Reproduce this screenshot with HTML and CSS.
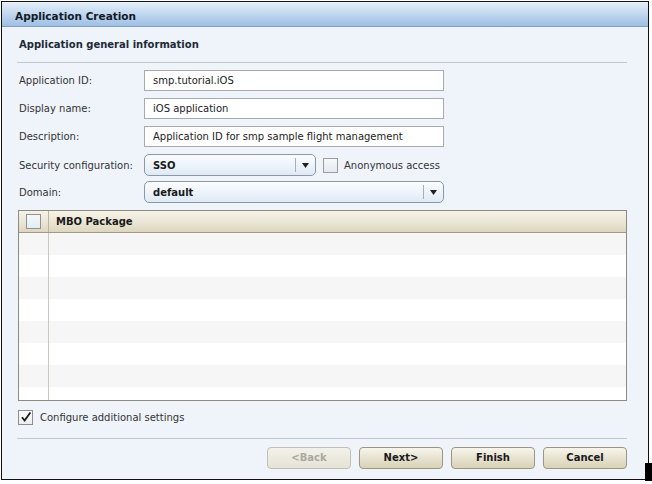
FILE: index.html
```html
<!DOCTYPE html>
<html>
<head>
<meta charset="utf-8">
<link rel="stylesheet" href="styles.css">
</head>
<body>
<div class="window">
  <div class="titlebar">Application Creation</div>
  <div class="content">
    <div class="section-title">Application general information</div>
    <div class="form">
      <div class="row">
        <div class="label">Application ID:</div>
        <div class="input">smp.tutorial.iOS</div>
      </div>
      <div class="row">
        <div class="label">Display name:</div>
        <div class="input">iOS application</div>
      </div>
      <div class="row">
        <div class="label">Description:</div>
        <div class="input">Application ID for smp sample flight management</div>
      </div>
      <div class="row sel">
        <div class="label">Security configuration:</div>
        <div class="select short">
          <span class="select-text">SSO</span>
          <span class="select-btn"><svg width="7" height="5" viewBox="0 0 7 5"><path d="M0 0H7L3.5 5Z" fill="#222"/></svg></span>
        </div>
        <span class="checkbox anon"></span>
        <span class="check-label">Anonymous access</span>
      </div>
      <div class="row sel">
        <div class="label">Domain:</div>
        <div class="select long">
          <span class="select-text">default</span>
          <span class="select-btn"><svg width="7" height="5" viewBox="0 0 7 5"><path d="M0 0H7L3.5 5Z" fill="#222"/></svg></span>
        </div>
      </div>
    </div>
    <div class="table">
      <div class="thead">
        <div class="cc"><span class="checkbox"></span></div>
        <div class="tc">MBO Package</div>
      </div>
      <div class="tbody">
        <div class="tr"><div class="cc"></div><div class="tc"></div></div>
        <div class="tr"><div class="cc"></div><div class="tc"></div></div>
        <div class="tr"><div class="cc"></div><div class="tc"></div></div>
        <div class="tr"><div class="cc"></div><div class="tc"></div></div>
        <div class="tr"><div class="cc"></div><div class="tc"></div></div>
        <div class="tr"><div class="cc"></div><div class="tc"></div></div>
        <div class="tr"><div class="cc"></div><div class="tc"></div></div>
        <div class="tr"><div class="cc"></div><div class="tc"></div></div>
      </div>
    </div>
    <div class="config">
      <span class="checkbox checked"><svg width="12" height="12" viewBox="0 0 12 12"><path d="M2 6.2L4.6 9.6L10.4 1.4" fill="none" stroke="#1a1a1a" stroke-width="1.8"/></svg></span>
      <span class="check-label">Configure additional settings</span>
    </div>
    <div class="buttons">
      <div class="btn disabled">&lt;Back</div>
      <div class="btn">Next&gt;</div>
      <div class="btn">Finish</div>
      <div class="btn">Cancel</div>
    </div>
  </div>
</div>
<div class="corner"></div>
</body>
</html>
```
FILE: styles.css
```css
html, body {
  margin: 0;
  padding: 0;
  background: #ffffff;
}
body {
  font-family: "DejaVu Sans", Verdana, sans-serif;
  font-size: 10px;
  color: #333;
}
.window {
  margin: 1px 0 0 1px;
  width: 646px;
  height: 476px;
  border: 1px solid #111;
  background: #eff4fb;
  padding-top: 1px;
  box-sizing: content-box;
  overflow: hidden;
}
.titlebar {
  height: 23px;
  line-height: 26px;
  padding-left: 13px;
  font-size: 10.5px;
  font-weight: bold;
  color: #111a26;
  background: linear-gradient(#e2edf9, #c3d8ef 45%, #9ebfe4);
  border-bottom: 1px solid #7e9dc3;
  overflow: hidden;
}
.content {
  padding: 0 21px 0 15px;
}
.section-title {
  margin-top: 11px;
  padding: 0 0 10px 2px;
  line-height: 14px;
  font-weight: bold;
  color: #1c2a36;
  border-bottom: 1px solid #c3c9cf;
}
.form {
  margin-top: 7px;
  display: flex;
  flex-direction: column;
}
.row {
  display: flex;
  align-items: center;
  height: 21px;
  margin-bottom: 7px;
}
.row.sel {
  height: 22px;
  margin-bottom: 5px;
}
.label {
  width: 125px;
  padding-left: 2px;
  color: #333;
}
.input {
  width: 290px;
  height: 19px;
  line-height: 19px;
  padding-left: 8px;
  border: 1px solid #a7abb0;
  background: #fff;
  color: #222;
}
.select {
  height: 20px;
  border: 1px solid #8c98a6;
  border-radius: 5px;
  background: linear-gradient(#fbfdff, #dfeaf6);
  display: flex;
  align-items: center;
  box-sizing: content-box;
}
.select.short {
  width: 170px;
}
.select.long {
  width: 298px;
}
.select-text {
  flex: 1;
  padding-left: 8px;
  font-weight: bold;
  color: #1a1a1a;
}
.select-btn {
  width: 19px;
  height: 14px;
  border-left: 1px solid #a4afbb;
  display: flex;
  align-items: center;
  justify-content: center;
}
.checkbox {
  width: 13px;
  height: 13px;
  border: 1px solid #9a9d9f;
  background: linear-gradient(#f6f8fa, #e4e9ee);
  display: inline-flex;
  align-items: center;
  justify-content: center;
  flex: none;
}
.checkbox.anon {
  margin-left: 7px;
}
.check-label {
  margin-left: 6px;
  color: #333;
}
.table {
  margin: 2px 0 0 1px;
  width: 607px;
  height: 189px;
  border: 1px solid #8d8b7d;
  background: #fff;
  overflow: hidden;
}
.thead {
  display: flex;
  height: 21px;
  border-bottom: 1px solid #9f9a84;
  background: linear-gradient(#f5f2e8, #e9e4d2 60%, #ddd6bf);
}
.thead .cc {
  border-right-color: #bab49c;
}
.cc {
  width: 29px;
  border-right: 1px solid #c9c9c4;
  display: flex;
  align-items: center;
  justify-content: center;
  flex: none;
}
.thead .checkbox {
  background: linear-gradient(#f5f8fa, #e3edf2);
  border-color: #8f9296;
}
.tc {
  flex: 1;
  padding-left: 7px;
  line-height: 21px;
  font-weight: bold;
  color: #1a1a1a;
}
.tbody {
  display: flex;
  flex-direction: column;
}
.tr {
  display: flex;
  height: 22px;
  flex: none;
}
.tr:nth-child(odd) {
  background: #f6f6f6;
}
.tr:nth-child(even) {
  background: #ffffff;
}
.config {
  margin-top: 9px;
  height: 14px;
  display: flex;
  align-items: center;
  padding-left: 1px;
}
.config .checkbox {
  background: linear-gradient(#fafafa, #eceeef);
  border-color: #8c8f92;
}
.config .check-label {
  margin-left: 7px;
}
.buttons {
  margin-top: 14px;
  border-top: 1px solid #c3c9cf;
  padding-top: 8px;
  display: flex;
  justify-content: flex-end;
  gap: 8px;
}
.btn {
  width: 82px;
  height: 20px;
  line-height: 20px;
  text-align: center;
  font-weight: bold;
  color: #1a1a1a;
  border: 1px solid #9b9681;
  border-radius: 4px;
  background: linear-gradient(#f7f5ec, #e6e1cd 55%, #d9d2b8);
}
.btn.disabled {
  color: #a9a8a0;
  border-color: #c2beb0;
  background: linear-gradient(#f2f1ea, #e6e3d6);
}
.corner {
  position: absolute;
  left: 645px;
  top: 463px;
  width: 7px;
  height: 18px;
  background: #000;
}
```
